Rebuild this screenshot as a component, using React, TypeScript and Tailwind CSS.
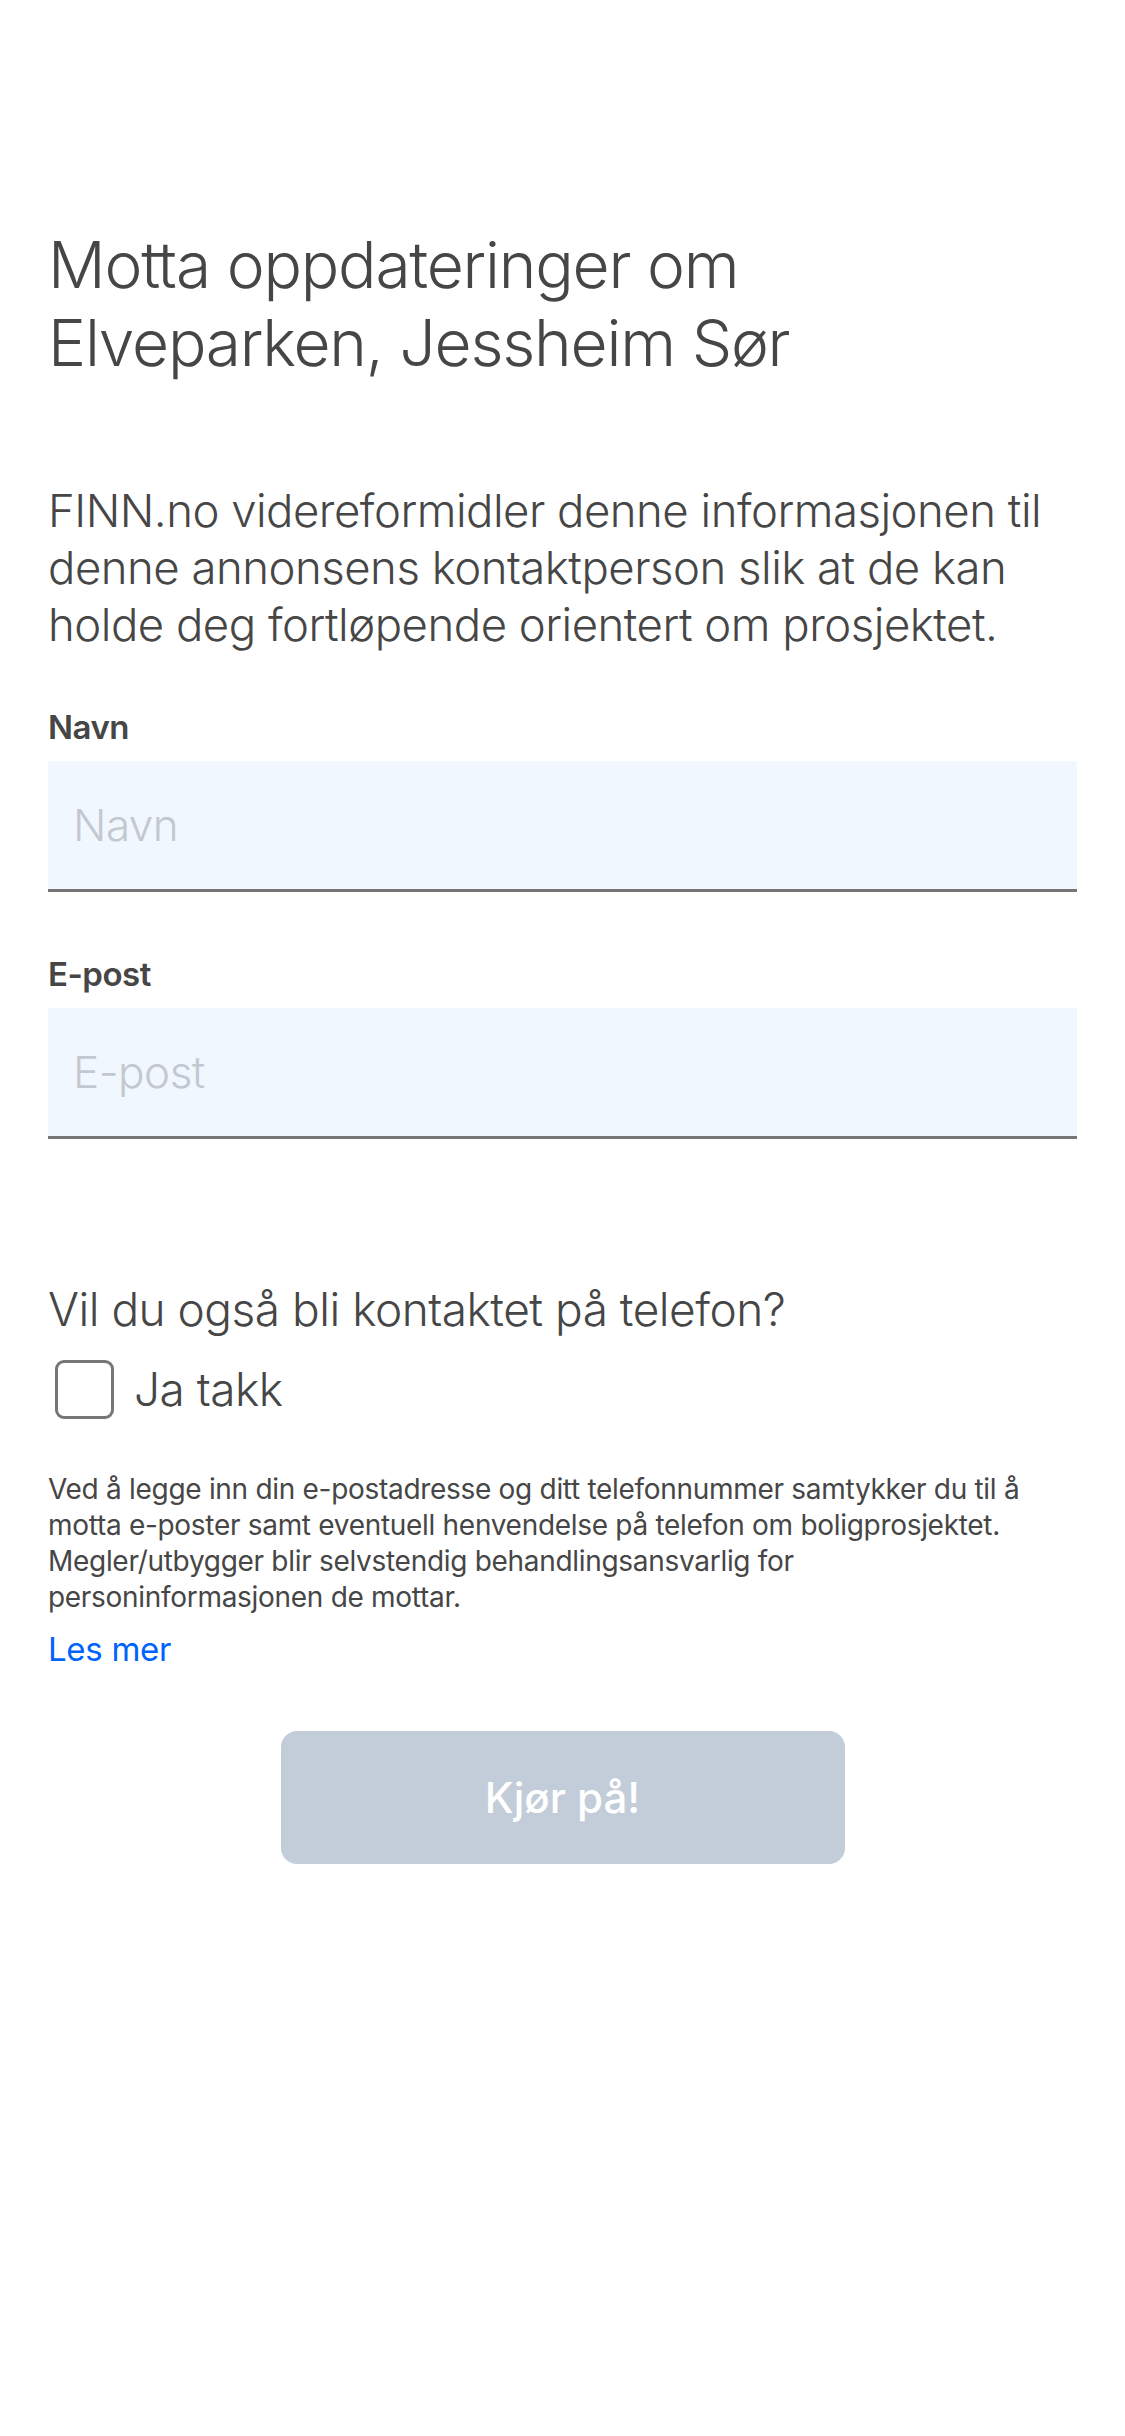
import React from "react";

export default function App() {
  return (
    <div
      className="min-h-[2436px] w-[1125px] bg-white text-[#464646]"
      style={{ fontFamily: "Inter, 'Noto Sans', sans-serif" }}
    >
      <div className="px-[48px] pt-[226px]">
        <h1 className="text-[64px] font-light leading-[78px] tracking-[-1.2px]">
          Motta oppdateringer om Elveparken, Jessheim Sør
        </h1>
        <p className="mt-[100px] text-[45.5px] font-light leading-[57px] tracking-[-0.5px]">
          FINN.no videreformidler denne informasjonen til denne annonsens kontaktperson slik at de kan holde deg fortløpende orientert om prosjektet.
        </p>

        <div className="mt-[54px]">
          <label className="block text-[33px] font-semibold leading-[40px] tracking-[-0.5px]">Navn</label>
          <div className="mt-[14px] h-[131px] border-b-[3px] border-[#767676] bg-[#f0f7fe] flex items-center px-[25px]">
            <span className="text-[44px] font-light text-[#c3c8d0] tracking-[-0.5px]">Navn</span>
          </div>
        </div>

        <div className="mt-[62px]">
          <label className="block text-[33px] font-semibold leading-[40px] tracking-[-0.5px]">E-post</label>
          <div className="mt-[14px] h-[131px] border-b-[3px] border-[#767676] bg-[#f0f7fe] flex items-center px-[25px]">
            <span className="text-[44px] font-light text-[#c3c8d0] tracking-[-0.5px]">E-post</span>
          </div>
        </div>

        <p className="mt-[142px] text-[46px] font-light leading-[56px] tracking-[-0.5px]">
          Vil du også bli kontaktet på telefon?
        </p>
        <div className="mt-[18px] flex items-center gap-[20px] pl-[7px]">
          <div className="h-[59px] w-[59px] rounded-[9px] border-[3px] border-[#767676]" />
          <span className="text-[46px] font-light tracking-[-0.5px]">Ja takk</span>
        </div>

        <p className="mt-[47px] pr-[20px] text-[28px] font-normal leading-[36px] tracking-[-0.3px]">
          Ved å legge inn din e-postadresse og ditt telefonnummer samtykker du til å motta e-poster samt eventuell henvendelse på telefon om boligprosjektet. Megler/utbygger blir selvstendig behandlingsansvarlig for personinformasjonen de mottar.
        </p>
        <a className="mt-[14px] block text-[33px] font-normal leading-[40px] text-[#0063fb] tracking-[-0.3px]">Les mer</a>

        <div className="mt-[62px] flex justify-center">
          <button className="h-[133px] w-[564px] rounded-[16px] bg-[#c3cdd9] text-[42px] font-medium text-white">
            Kjør på!
          </button>
        </div>
      </div>
    </div>
  );
}
